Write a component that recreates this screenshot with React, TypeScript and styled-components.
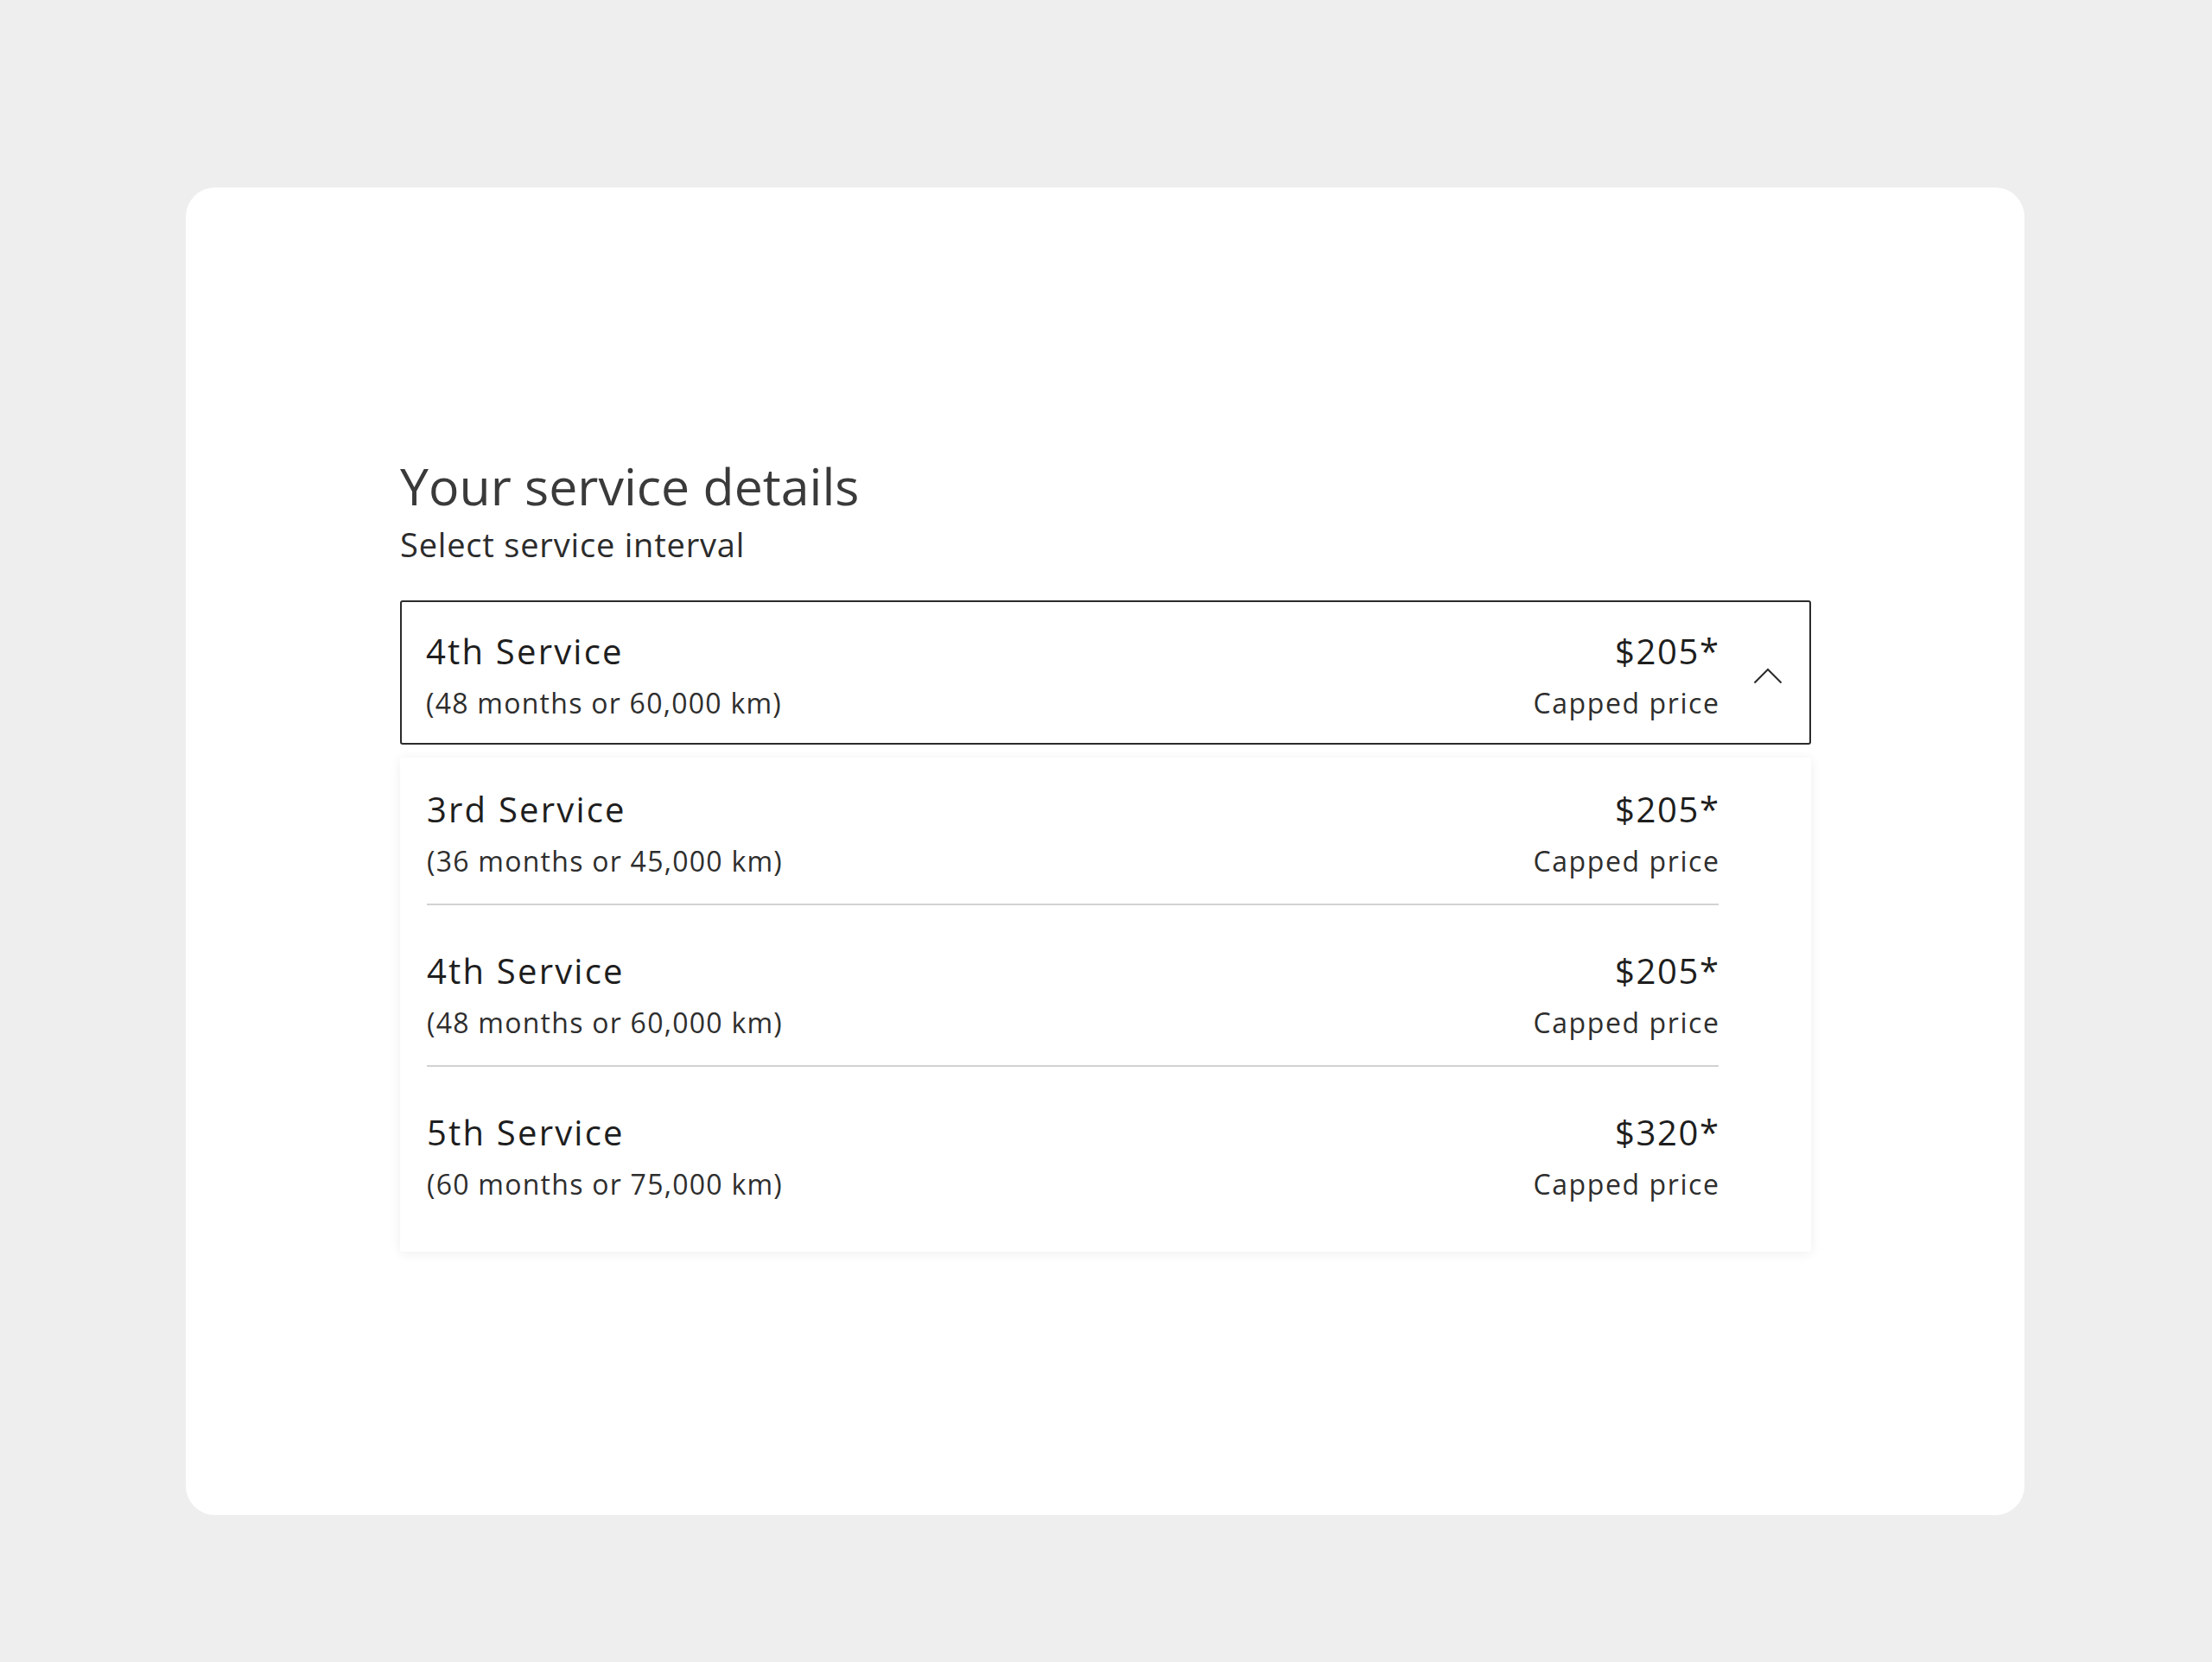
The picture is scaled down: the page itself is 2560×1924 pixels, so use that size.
import React from 'react';
import styled, { createGlobalStyle } from 'styled-components';

const GlobalStyle = createGlobalStyle`
  html, body {
    margin: 0;
    padding: 0;
    background: #eeeeee;
  }
  body {
    font-family: 'Open Sans', 'Lato', sans-serif;
    color: #222222;
  }
`;

const Page = styled.div`
  min-height: 1924px;
  padding: 217px 217px 0 215px;
  box-sizing: border-box;
`;

const Card = styled.div`
  width: 2128px;
  height: 1537px;
  background: #ffffff;
  border-radius: 34px;
  padding: 310px 247px 0 248px;
  box-sizing: border-box;
`;

const Title = styled.h1`
  margin: 0;
  font-size: 59px;
  font-weight: 400;
  line-height: 70px;
  color: #3a3a3a;
`;

const Subtitle = styled.p`
  margin: 10px 0 0;
  font-size: 38px;
  line-height: 46px;
  letter-spacing: 0.8px;
  color: #2c2c2c;
`;

const SelectBox = styled.div`
  margin-top: 42px;
  display: flex;
  align-items: center;
  border: 2px solid #2b2b2b;
  border-radius: 3px;
  padding: 32px 31px 26px 28px;
`;

const Option = styled.div<{ $first?: boolean; $last?: boolean }>`
  display: flex;
  align-items: center;
  padding-top: ${(p) => (p.$first ? '35px' : '51px')};
  padding-bottom: ${(p) => (p.$last ? '58px' : '29px')};
  border-bottom: ${(p) => (p.$last ? 'none' : '2px solid #d2d2d2')};
`;

const Selected = styled.div`
  display: flex;
  align-items: center;
  flex: 1;
`;

const Left = styled.div`
  display: flex;
  flex-direction: column;
  gap: 14px;
  flex: 1;
`;

const Right = styled.div`
  display: flex;
  flex-direction: column;
  align-items: flex-end;
  gap: 14px;
`;

const Name = styled.span`
  font-size: 40px;
  line-height: 50px;
  letter-spacing: 2.2px;
  color: #1e1e1e;
`;

const Interval = styled.span`
  font-size: 32px;
  line-height: 41px;
  letter-spacing: 1.25px;
  color: #2e2e2e;
`;

const Price = styled.span`
  font-size: 40px;
  line-height: 50px;
  letter-spacing: 1.6px;
  margin-right: -1.6px;
  color: #1e1e1e;
`;

const PriceNote = styled.span`
  font-size: 32px;
  line-height: 41px;
  letter-spacing: 1.6px;
  margin-right: -1.6px;
  color: #2e2e2e;
`;

const Chevron = styled.svg`
  width: 34px;
  height: 20px;
  margin-left: 40px;
  flex-shrink: 0;
`;

const Menu = styled.div`
  margin-top: 15px;
  background: #ffffff;
  box-shadow: 0 2px 14px rgba(0, 0, 0, 0.07);
  border-radius: 3px;
  padding: 0 107px 0 31px;
`;

type Service = { name: string; interval: string; price: string };

const services: Service[] = [
  { name: '3rd Service', interval: '(36 months or 45,000 km)', price: '$205*' },
  { name: '4th Service', interval: '(48 months or 60,000 km)', price: '$205*' },
  { name: '5th Service', interval: '(60 months or 75,000 km)', price: '$320*' },
];

const ServiceText = ({ s }: { s: Service }) => (
  <>
    <Left>
      <Name>{s.name}</Name>
      <Interval>{s.interval}</Interval>
    </Left>
    <Right>
      <Price>{s.price}</Price>
      <PriceNote>Capped price</PriceNote>
    </Right>
  </>
);

export default function App() {
  return (
    <>
      <GlobalStyle />
      <Page>
        <Card>
          <Title>Your service details</Title>
          <Subtitle>Select service interval</Subtitle>
          <SelectBox>
            <Selected>
              <ServiceText s={services[1]} />
            </Selected>
            <Chevron viewBox="0 0 34 20" fill="none">
              <path d="M1.5 18.5 L17 3 L32.5 18.5" stroke="#2b2b2b" strokeWidth="2" />
            </Chevron>
          </SelectBox>
          <Menu>
            {services.map((s, i) => (
              <Option key={s.name} $first={i === 0} $last={i === services.length - 1}>
                <ServiceText s={s} />
              </Option>
            ))}
          </Menu>
        </Card>
      </Page>
    </>
  );
}
